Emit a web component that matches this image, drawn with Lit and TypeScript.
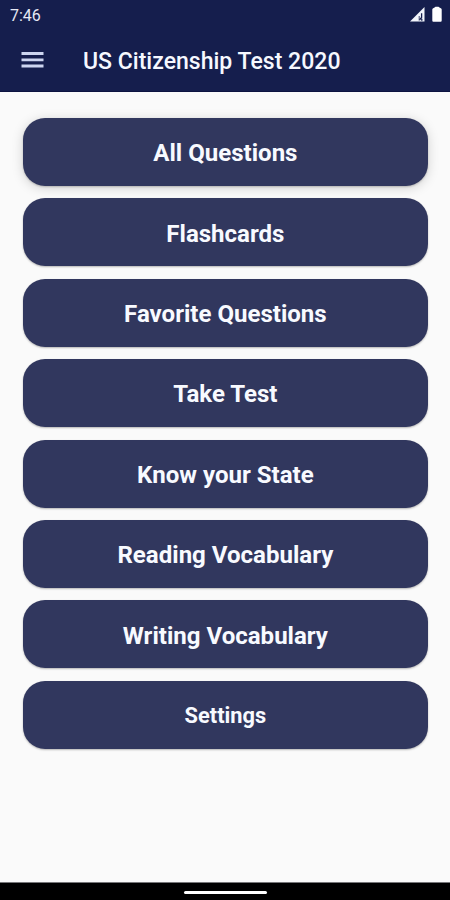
import { LitElement, html, css } from "lit";
import { customElement, property } from "lit/decorators.js";

@customElement("menu-button")
class MenuButton extends LitElement {
  @property({ type: Boolean, reflect: true }) raised = false;
  @property({ type: Boolean, reflect: true }) small = false;

  static styles = css`
    :host {
      display: block;
      height: 68px;
    }
    .button {
      display: flex;
      align-items: center;
      justify-content: center;
      box-sizing: border-box;
      width: 100%;
      height: 100%;
      margin: 0;
      padding: 2.4px 0 0;
      border: 0;
      border-radius: 22px;
      background: #31375e;
      color: #f8faff;
      font: 700 24.05px/28px Roboto, sans-serif;
      box-shadow: 0 1px 2px rgba(0, 0, 0, 0.28);
    }
    :host([raised]) .button {
      box-shadow: 0 1px 2px rgba(0, 0, 0, 0.2), 0 2px 12px rgba(0, 0, 0, 0.17);
    }
    :host([small]) .button {
      font-size: 21.8px;
    }
  `;

  render() {
    return html`<button class="button"><slot></slot></button>`;
  }
}

@customElement("app-root")
class AppRoot extends LitElement {
  static styles = css`
    :host {
      display: flex;
      flex-direction: column;
      height: 900px;
      background: #fafafa;
      font-family: Roboto, sans-serif;
      overflow: hidden;
    }
    .header {
      height: 92px;
      flex: none;
      box-sizing: border-box;
      background: #151e4d;
      border-bottom: 1px solid #0d1340;
      color: #f6f8ff;
    }
    .status {
      display: flex;
      align-items: center;
      justify-content: space-between;
      height: 30px;
      padding: 0 7px 0 10px;
    }
    .time {
      font-size: 16px;
      line-height: 30px;
      padding-top: 1px;
      color: #e6e9f4;
    }
    .indicators {
      display: block;
    }
    .toolbar {
      display: flex;
      align-items: center;
      height: 61px;
      padding-left: 21px;
    }
    .menu {
      display: block;
      margin-bottom: 2px;
    }
    .title {
      margin: 2px 0 0 39px;
      font-size: 23.05px;
      font-weight: 500;
      line-height: 28px;
      white-space: nowrap;
    }
    .list {
      flex: 1;
      display: flex;
      flex-direction: column;
      gap: 12.4px;
      padding: 26px 22.4px 0 23.2px;
    }
    .navigation {
      display: flex;
      justify-content: center;
      align-items: center;
      height: 18px;
      padding-top: 2px;
      box-sizing: border-box;
      flex: none;
      background: #000;
      border-top: 1px solid #77777a;
    }
    .handle {
      width: 83px;
      height: 3px;
      border-radius: 2px;
      background: #fff;
    }
  `;

  private items = [
    "All Questions",
    "Flashcards",
    "Favorite Questions",
    "Take Test",
    "Know your State",
    "Reading Vocabulary",
    "Writing Vocabulary",
    "Settings",
  ];

  render() {
    return html`
      <header class="header">
        <div class="status">
          <span class="time">7:46</span>
          <svg class="indicators" width="34" height="18" viewBox="0 0 34 18">
            <path d="M1 15.5 15.5 1V15.5Z" fill="#f2f5fc" />
            <path d="M12.6 7.3v4.2l-2 2.3M12.8 12.8v2" fill="none" stroke="#151e4d" stroke-width="1.3" />
            <path d="M10.2 10v4.6" stroke="#151e4d" stroke-width=".8" />
            <path d="M24.2 2.2q1.6-.4 2.3-1.4h3q.7 1 2.3 1.4.9.3.9 1.3V14.5q0 1.2-1 1.2h-7.4q-1 0-1-1.2V3.5q0-1 .9-1.3Z" fill="#fff" />
          </svg>
        </div>
        <div class="toolbar">
          <svg class="menu" width="23" height="18" viewBox="0 0 23 18">
            <path d="M.5 2.5h22M.5 8.8h22M.5 15h22" stroke="#cdd5f0" stroke-width="2.8" />
          </svg>
          <div class="title">US Citizenship Test 2020</div>
        </div>
      </header>
      <main class="list">
        ${this.items.map(
          (label, i) => html`<menu-button ?raised=${i === 0} ?small=${label === "Settings"}>${label}</menu-button>`
        )}
      </main>
      <footer class="navigation"><div class="handle"></div></footer>
    `;
  }
}
